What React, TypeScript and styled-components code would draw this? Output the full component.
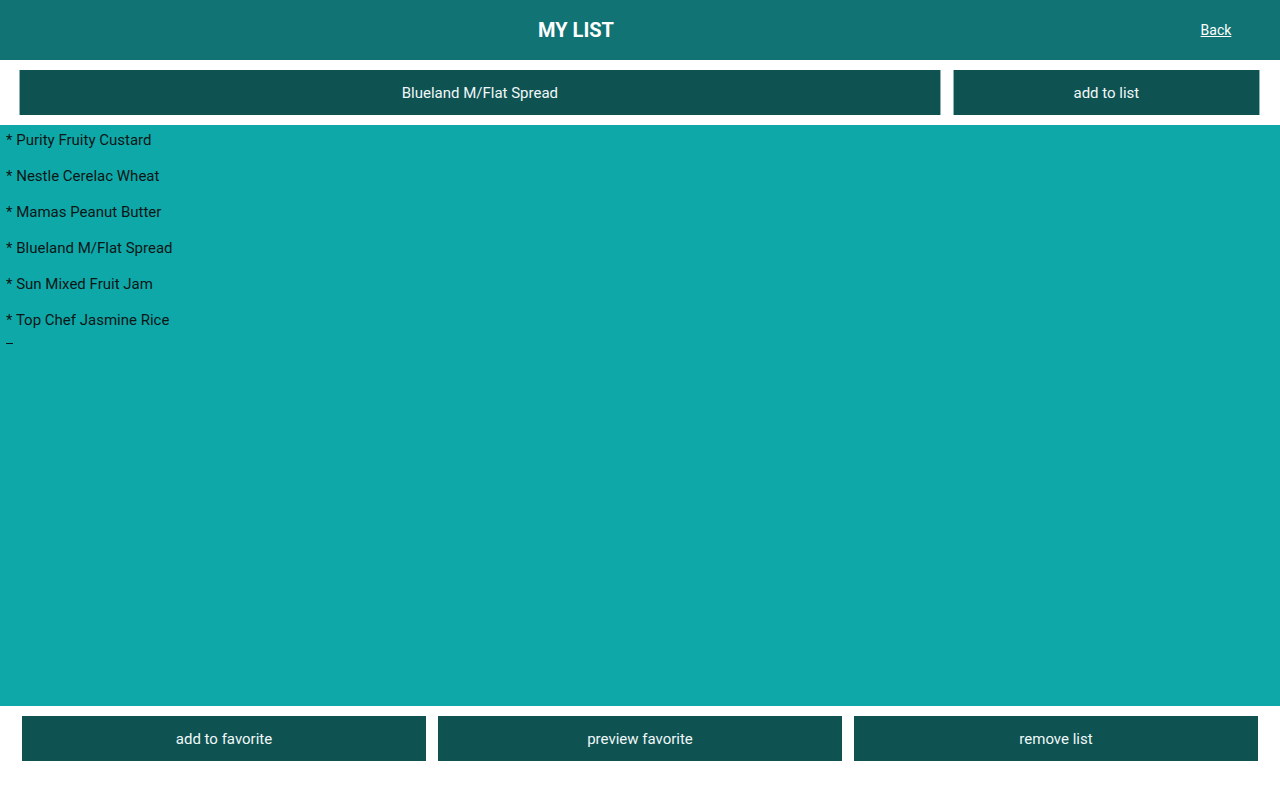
import React from "react";
import styled, { createGlobalStyle } from "styled-components";

const Global = createGlobalStyle`
  html, body { margin: 0; padding: 0; background: #ffffff; }
  body { font-family: Roboto, "Liberation Sans", Arial, sans-serif; }
  * { box-sizing: border-box; }
`;

const Page = styled.div`
  width: 1280px;
  height: 800px;
  display: flex;
  flex-direction: column;
  background: #ffffff;
`;

const Header = styled.header`
  height: 60px;
  background: #117373;
  display: grid;
  grid-template-columns: 90% 10%;
  align-items: center;
  color: #ffffff;
`;

const Title = styled.h1`
  margin: 0;
  text-align: center;
  font-size: 20px;
  font-weight: 700;
  letter-spacing: 0;
`;

const BackLink = styled.a`
  justify-self: center;
  color: #ffffff;
  font-size: 14px;
  text-decoration: underline;
  cursor: pointer;
`;

const InputRow = styled.div`
  margin-top: 10px;
  height: 45px;
  padding: 0 20px 0 19px;
  display: grid;
  grid-template-columns: 3fr 1fr;
  gap: 12px;
`;

const Field = styled.input`
  width: 100%;
  min-width: 0;
  height: 45px;
  padding: 0;
  background: #0e5252;
  border: none;
  border-left: 1px solid #8fb3b3;
  border-right: 1px solid #8fb3b3;
  color: #f0f8f8;
  font-family: Roboto, "Liberation Sans", Arial, sans-serif;
  font-size: 15px;
  text-align: center;
  outline: none;
`;

const ActionButton = styled.button<{ $bordered?: boolean }>`
  width: 100%;
  min-width: 0;
  height: 45px;
  padding: 0;
  background: #0e5252;
  border: none;
  ${(p) => (p.$bordered ? "border-left: 1px solid #8fb3b3; border-right: 1px solid #8fb3b3;" : "")}
  color: #f0f8f8;
  font-family: Roboto, "Liberation Sans", Arial, sans-serif;
  font-size: 15px;
  cursor: pointer;
`;

const ListArea = styled.main`
  margin-top: 10px;
  height: 581px;
  background: #0fa8a8;
  padding: 5px 6px 0;
  color: #0b1616;
`;

const Item = styled.p`
  margin: 0 0 16px;
  font-size: 15px;
  line-height: 20px;
`;

const Cursor = styled.div`
  width: 7px;
  height: 1px;
  margin-top: -3px;
  background: #0b1616;
`;

const BottomRow = styled.div`
  margin-top: 10px;
  height: 45px;
  padding: 0 22px;
  display: grid;
  grid-template-columns: 1fr 1fr 1fr;
  gap: 12px;
`;

const items = [
  "Purity Fruity Custard",
  "Nestle Cerelac Wheat",
  "Mamas Peanut Butter",
  "Blueland M/Flat Spread",
  "Sun Mixed Fruit Jam",
  "Top Chef Jasmine Rice",
];

export default function App() {
  return (
    <Page>
      <Global />
      <Header>
        <Title>MY LIST</Title>
        <BackLink>Back</BackLink>
      </Header>
      <InputRow>
        <Field defaultValue="Blueland M/Flat Spread" />
        <ActionButton $bordered>add to list</ActionButton>
      </InputRow>
      <ListArea>
        {items.map((it) => (
          <Item key={it}>* {it}</Item>
        ))}
        <Cursor />
      </ListArea>
      <BottomRow>
        <ActionButton>add to favorite</ActionButton>
        <ActionButton>preview favorite</ActionButton>
        <ActionButton>remove list</ActionButton>
      </BottomRow>
    </Page>
  );
}
